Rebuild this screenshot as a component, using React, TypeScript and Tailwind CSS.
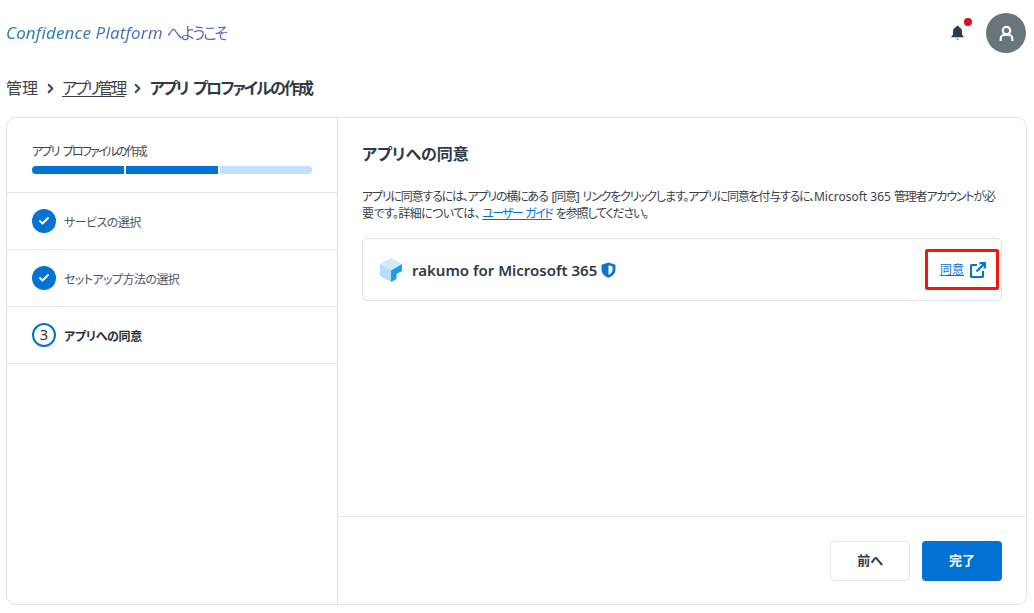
import { Check, ChevronRight } from "lucide-react";

const font = "font-['Noto_Sans','Noto_Sans_CJK_JP',sans-serif] [font-feature-settings:'palt']";

function RakumoLogo() {
  return (
    <svg width="24" height="26" viewBox="0 0 24 26" className="shrink-0">
      <path d="M12 1 L23 7 L12 13 L1 7 Z" fill="#d3eafc" />
      <path d="M1 7 L12 13 L12 25 L1 19 Z" fill="#b5defa" />
      <path d="M12 25 L12 13.5 L23 7 L23 14 L17.5 17 L17.5 22 Z" fill="#1a9cf0" />
    </svg>
  );
}

function ShieldIcon() {
  return (
    <svg width="15" height="16" viewBox="0 0 14 15" className="shrink-0">
      <path d="M7 0.5 L13.5 2.5 V7 C13.5 11 10.5 13.6 7 14.8 C3.5 13.6 0.5 11 0.5 7 V2.5 Z" fill="#0f74d1" />
      <path d="M7 3 L10.8 4.2 V7 C10.8 9.4 9.2 11 7 12 Z" fill="#ffffff" />
    </svg>
  );
}

function LinkOutIcon() {
  return (
    <svg width="16" height="16" viewBox="0 0 16 16" fill="none" stroke="#0273d4" strokeWidth="2.2" className="shrink-0">
      <path d="M7 3 H2 A1 1 0 0 0 1 4 V14 A1 1 0 0 0 2 15 H12 A1 1 0 0 0 13 14 V9" />
      <path d="M6.5 9.5 L14.5 1.5" />
      <path d="M9.5 1.2 H14.8 V6.5" />
    </svg>
  );
}

function Step({ label, done, num }: { label: string; done?: boolean; num?: number }) {
  return (
    <div className="flex h-[57px] items-center gap-[8px] border-b border-[#e6e6e6] pl-[25px]">
      {done ? (
        <span className="flex h-6 w-6 items-center justify-center rounded-full bg-[#0273d4]">
          <Check size={12} strokeWidth={4} className="text-white" />
        </span>
      ) : (
        <span className="flex h-6 w-6 items-center justify-center rounded-full border-2 border-[#0273d4] pb-[2px] text-[14px] text-[#2b2f36]">
          {num}
        </span>
      )}
      <span
        className={
          done
            ? "pt-[3px] text-xs tracking-[-0.55px] text-[#4b5563]"
            : "pt-[3px] text-xs font-bold tracking-[-0.3px] text-[#2b2f36]"
        }
      >
        {label}
      </span>
    </div>
  );
}

export default function App() {
  return (
    <div className={`flex h-[613px] w-[1034px] flex-col overflow-hidden bg-white ${font}`}>
      <header className="flex h-[66px] shrink-0 items-center justify-between pl-[6px] pr-[8px]">
        <p className="bg-linear-to-r from-[#1a86a8] to-[#5b5fc7] bg-clip-text text-[16px] tracking-[-2.4px] text-transparent">
          <span className="text-[17px] italic tracking-[0.15px]">Confidence Platform</span>
          <span className="ml-[4px]">へようこそ</span>
        </p>
        <div className="flex items-center gap-[21px]">
          <svg width="15" height="16" viewBox="0 0 15 16">
            <path d="M7.5 0.8 C8.3 0.8 8.8 1.3 8.8 2 C11 2.6 12 4.4 12 6.5 V9.5 L14 12.3 H1 L3 9.5 V6.5 C3 4.4 4 2.6 6.2 2 C6.2 1.3 6.7 0.8 7.5 0.8 Z" fill="#2f3b4c" />
            <path d="M6 13.5 H9 L7.5 15.3 Z" fill="#6b7280" />
          </svg>
          <span className="absolute left-[964px] top-[18px] h-2 w-2 rounded-full bg-[#d6121f]" />
          <div className="flex h-10 w-10 items-center justify-center rounded-full bg-[#68767c]">
            <svg width="15" height="17" viewBox="0 0 18 20" fill="none" stroke="#ffffff" strokeWidth="2.6">
              <circle cx="9" cy="6.5" r="4.5" />
              <path d="M2 19 V16.5 C2 13.5 4.5 11.5 7 11.5 H11 C13.5 11.5 16 13.5 16 16.5 V19" />
            </svg>
          </div>
        </div>
      </header>

      <nav className="flex h-[44px] shrink-0 items-center pl-[6px] text-[16px] text-[#3a3f47]">
        <span>管理</span>
        <ChevronRight size={15} strokeWidth={3} className="mx-[5px] text-[#3a4656]" />
        <span className="-ml-[1px] tracking-[-2.4px] underline underline-offset-2">アプリ管理</span>
        <ChevronRight size={15} strokeWidth={3} className="mx-[5px] text-[#3a4656]" />
        <span className="font-bold tracking-[-1.85px] [word-spacing:3px] text-[#2f3a48]">アプリ プロファイルの作成</span>
      </nav>

      <main className="mx-[6px] mb-[8px] mt-[7px] flex w-[1021px] flex-1 rounded-[10px] border border-[#e2e2e2]">
        <aside className="w-[331px] shrink-0 border-r border-[#e2e2e2]">
          <div className="h-[75px] border-b border-[#e6e6e6] px-[25px] pt-[25px]">
            <p className="text-xs leading-[18px] tracking-[-1.85px] [word-spacing:3px] text-[#3f444c]">アプリ プロファイルの作成</p>
            <div className="mt-[5px] flex h-2 gap-[2px]">
              <span className="flex-1 rounded-l-full bg-[#0273d4]" />
              <span className="flex-1 bg-[#0273d4]" />
              <span className="flex-1 rounded-r-full bg-[#c2e2fb]" />
            </div>
          </div>
          <Step label="サービスの選択" done />
          <Step label="セットアップ方法の選択" done />
          <Step label="アプリへの同意" num={3} />
        </aside>

        <section className="flex min-w-0 flex-1 flex-col">
          <div className="flex-1 px-[24px] pt-[24px]">
            <h1 className="text-[16px] font-bold leading-[24px] text-[#2f3a48]">アプリへの同意</h1>
            <p className="mt-[22px] text-[12px] leading-[17px] text-[#3a3f47]">
              <span className="tracking-[-1.2px] [word-spacing:2px]">アプリに同意するには、アプリの横にある [同意] リンクをクリックします。アプリに同意を付与するに、</span>
              <span>Microsoft 365 </span>
              <span className="tracking-[-1.2px]">管理者アカウントが必</span>
              <span className="tracking-[-0.6px]">要です。詳細については、</span>
              <a className="ml-[2px] tracking-[-1.7px] [word-spacing:2px] text-[#0273d4] underline">ユーザー ガイド</a>
              <span className="ml-[4px] tracking-[-1.2px]">を参照してください。</span>
            </p>
            <div className="mt-[16px] flex h-[63px] items-center justify-between rounded-[5px] border border-[#e2e2e2] pl-[16px] pr-[2px]">
              <div className="flex items-center gap-[9px]">
                <RakumoLogo />
                <span className="pt-[1px] text-[15px] font-semibold text-[#2f3a48]">rakumo for Microsoft 365</span>
                <span className="-ml-[5px]">
                  <ShieldIcon />
                </span>
              </div>
              <div className="flex h-[41px] w-[74px] items-center gap-[6px] rounded-[2px] border-[3px] border-[#f5170c] pl-[12px]">
                <a className="text-xs text-[#0273d4] underline">同意</a>
                <LinkOutIcon />
              </div>
            </div>
          </div>
          <footer className="flex h-[88px] shrink-0 items-center justify-end gap-[12px] border-t border-[#e6e6e6] pr-[24px]">
            <button className="h-10 w-20 rounded-[4px] border border-[#e6e6e6] bg-white text-[13px] font-semibold text-[#2f3a48]">
              前へ
            </button>
            <button className="h-10 w-20 rounded-[4px] bg-[#0273d4] text-[13px] font-semibold text-white">完了</button>
          </footer>
        </section>
      </main>
    </div>
  );
}
